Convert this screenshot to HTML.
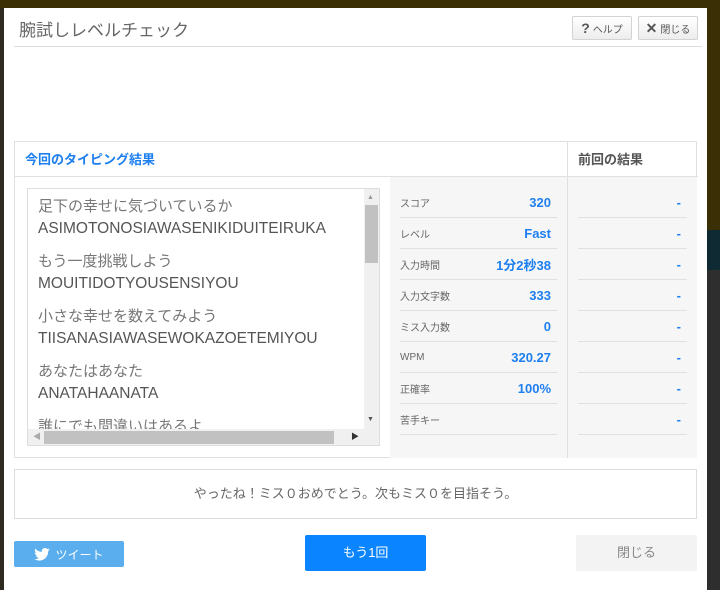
<!DOCTYPE html>
<html><head><meta charset="utf-8"><style>
*{box-sizing:border-box;margin:0;padding:0}
body{width:720px;height:590px;overflow:hidden;background:#2e2a22;font-family:"Liberation Sans","Noto Sans CJK JP",sans-serif;position:relative}
.topbar{position:absolute;left:0;top:0;width:720px;height:8px;background:#3a2f05}
.rside{position:absolute;left:707px;top:0;width:13px;height:590px;background:linear-gradient(#3a2f05 0,#3a2f05 230px,#0f2a33 230px,#0f2a33 270px,#2e2e2e 270px)}
.modal{position:absolute;left:4px;top:8px;width:703px;height:582px;background:#fff}
.abs{position:absolute}
.title{left:15px;top:8px;font-size:17px;color:#666}
.hr{left:10px;top:38px;width:688px;height:1px;background:#ddd}
.btn{top:8px;height:24px;border:1px solid #d3d3d3;border-radius:2px;background:linear-gradient(#fff,#ededed);font-size:10px;color:#555;display:flex;align-items:center;justify-content:center;gap:3px}
.btn b{font-size:14px;color:#555}
.tbl{left:10px;top:133px;width:683px;height:317px;border:1px solid #e0e0e0}
.h1{left:10px;top:7px;font-size:13px;font-weight:bold;color:#1e7ff0}
.h2{left:563px;top:7px;font-size:13px;font-weight:bold;color:#555}
.vdiv{left:552px;top:0;width:1px;height:316px;background:#e0e0e0}
.hdiv{left:0;top:34px;width:683px;height:1px;background:#e0e0e0}
.stat{left:375px;top:35px;width:177px;height:281px;background:#f6f6f6}
.prev{left:553px;top:35px;width:129px;height:281px;background:#f6f6f6}
.ta{left:12px;top:46px;width:353px;height:258px;border:1px solid #ddd;background:#fff;overflow:hidden}
.ta .t{position:absolute;left:10px;font-size:15.5px;color:#555;line-height:22px;white-space:nowrap}
.ta .t em{font-style:normal;color:#777;font-size:15px}
.row{position:absolute;left:10px;width:157px;height:31px;border-bottom:1px solid #e0e0e0;font-size:10px;color:#666;display:flex;align-items:center;justify-content:space-between;padding-right:6px}
.row i{font-style:normal;font-size:13px;font-weight:bold;color:#1e7ff0}
.prow{position:absolute;left:10px;width:109px;height:31px;border-bottom:1px solid #e0e0e0;display:flex;align-items:center;justify-content:flex-end;padding-right:6px}
.prow i{font-style:normal;font-size:13px;font-weight:bold;color:#1e7ff0}
.msg{left:10px;top:461px;width:683px;height:50px;border:1px solid #ddd;font-size:13px;color:#666;text-align:center;line-height:48px}
</style></head><body>
<div class="topbar"></div><div class="rside"></div>
<div class="modal">
 <div class="abs title">腕試しレベルチェック</div>
 <div class="abs btn" style="left:568px;width:60px"><b>?</b>ヘルプ</div>
 <div class="abs btn" style="left:634px;width:60px"><b>✕</b>閉じる</div>
 <div class="abs hr"></div>
 <div class="abs tbl">
  <div class="abs h1">今回のタイピング結果</div>
  <div class="abs h2">前回の結果</div>
  <div class="abs hdiv"></div>
  <div class="abs stat">
   <div class="row" style="top:10px"><span>スコア</span><i>320</i></div>
   <div class="row" style="top:41px"><span>レベル</span><i>Fast</i></div>
   <div class="row" style="top:72px"><span>入力時間</span><i>1分2秒38</i></div>
   <div class="row" style="top:103px"><span>入力文字数</span><i>333</i></div>
   <div class="row" style="top:134px"><span>ミス入力数</span><i>0</i></div>
   <div class="row" style="top:165px"><span>WPM</span><i>320.27</i></div>
   <div class="row" style="top:196px"><span>正確率</span><i>100%</i></div>
   <div class="row" style="top:227px"><span>苦手キー</span><i></i></div>
  </div>
  <div class="abs prev">
   <div class="prow" style="top:10px"><i>-</i></div>
   <div class="prow" style="top:41px"><i>-</i></div>
   <div class="prow" style="top:72px"><i>-</i></div>
   <div class="prow" style="top:103px"><i>-</i></div>
   <div class="prow" style="top:134px"><i>-</i></div>
   <div class="prow" style="top:165px"><i>-</i></div>
   <div class="prow" style="top:196px"><i>-</i></div>
   <div class="prow" style="top:227px"><i>-</i></div>
  </div>
  <div class="abs vdiv"></div>
  <div class="abs ta">
   <div class="t" style="top:7px"><em>足下の幸せに気づいているか</em><br>ASIMOTONOSIAWASENIKIDUITEIRUKA</div>
   <div class="t" style="top:62px"><em>もう一度挑戦しよう</em><br>MOUITIDOTYOUSENSIYOU</div>
   <div class="t" style="top:117px"><em>小さな幸せを数えてみよう</em><br>TIISANASIAWASEWOKAZOETEMIYOU</div>
   <div class="t" style="top:172px"><em>あなたはあなた</em><br>ANATAHAANATA</div>
   <div class="t" style="top:227px"><em>誰にでも間違いはあるよ</em></div>
   <div class="abs" style="left:336px;top:0;width:16px;height:240px;background:#f0f0f0"></div>
   <div class="abs" style="left:337px;top:16px;width:13px;height:58px;background:#c1c1c1"></div>
   <div class="abs" style="left:339px;top:5px;font-size:7px;color:#999">▲</div>
   <div class="abs" style="left:339px;top:227px;font-size:7px;color:#555">▼</div>
   <div class="abs" style="left:0;top:240px;width:352px;height:17px;background:#f0f0f0"></div>
   <div class="abs" style="left:16px;top:242px;width:290px;height:13px;background:#c1c1c1"></div>
   <div class="abs" style="left:5px;top:242px;font-size:8px;color:#aaa">◀</div>
   <div class="abs" style="left:323px;top:242px;font-size:8px;color:#333">▶</div>
  </div>
 </div>
 <div class="abs msg">やったね！ミス０おめでとう。次もミス０を目指そう。</div>
 <div class="abs" style="left:10px;top:533px;width:110px;height:26px;background:#5aaeee;border-radius:2px;color:#fff;font-size:12px;display:flex;align-items:center;justify-content:center;gap:5px">
  <svg width="16" height="13" viewBox="0 0 24 20"><path fill="#fff" d="M24 2.4a9.8 9.8 0 0 1-2.8.8A4.9 4.9 0 0 0 23.3.4a9.9 9.9 0 0 1-3.1 1.2A4.9 4.9 0 0 0 11.8 6 14 14 0 0 1 1.7.9a4.9 4.9 0 0 0 1.500 6.6A4.9 4.9 0 0 1 1 6.9a4.9 4.9 0 0 0 3.9 4.8 4.9 4.9 0 0 1-2.2.1 4.9 4.9 0 0 0 4.6 3.4A9.9 9.9 0 0 1 0 17.2 14 14 0 0 0 7.5 19.4c9.1 0 14-7.5 14-14v-.6A10 10 0 0 0 24 2.4z"/></svg>ツイート</div>
 <div class="abs" style="left:301px;top:527px;width:121px;height:36px;background:#0a84ff;border-radius:2px;color:#fff;font-size:13px;text-align:center;line-height:36px">もう1回</div>
 <div class="abs" style="left:572px;top:527px;width:121px;height:36px;background:#f3f3f3;border-radius:2px;color:#888;font-size:13px;text-align:center;line-height:36px">閉じる</div>
</div>
</body></html>
